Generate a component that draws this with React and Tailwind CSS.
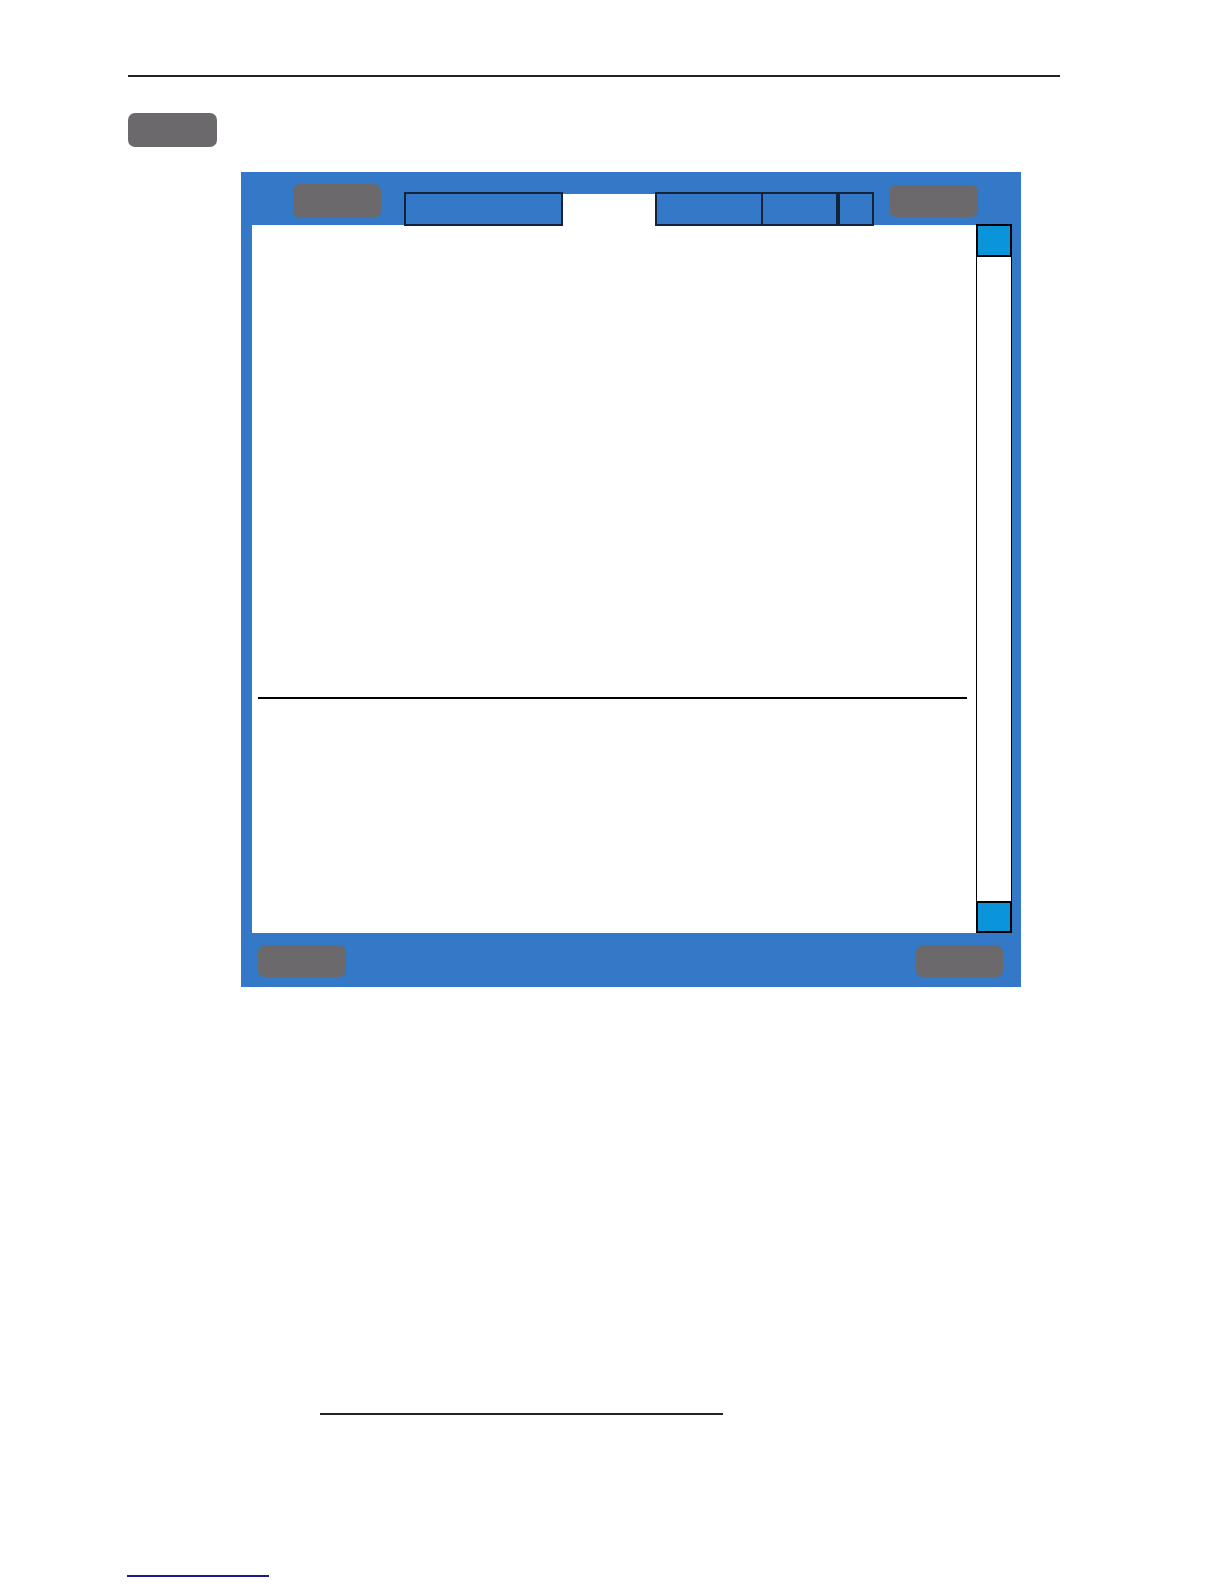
export default function App() {
  return (
    <div className="w-[1224px] h-[1584px] bg-white flex flex-col items-start overflow-hidden" style={{ fontFamily: '"Liberation Sans", Arial, sans-serif' }}>
      <div className="mt-[75px] ml-[128px] w-[932px] h-[2px] bg-[#222222]" />
      <div className="mt-[36px] ml-[128px] w-[89px] h-[34px] rounded-[7px] bg-[#6b696b]" />
      <div className="mt-[25px] ml-[241px] w-[780px] h-[815px] bg-[#3479c7] flex flex-col">
        <div className="h-[53px] flex items-start pl-[52px] pt-[12px]">
          <div className="w-[88px] h-[34px] rounded-[7px] bg-[#6b696b]" />
          <div className="relative z-10 ml-[23px] mt-[8px] flex items-start h-[34px]">
            <div className="w-[159px] h-[34px] border-2 border-[#13233a] bg-[#3479c7]" />
            <div className="w-[92px] h-[34px] mt-[1.5px] bg-white" />
            <div className="w-[108px] h-[34px] border-2 border-[#13233a] bg-[#3479c7]" />
            <div className="w-[75px] h-[34px] border-2 border-l-0 border-[#13233a] bg-[#3479c7]" />
            <div className="w-[36px] h-[34px] border-2 border-[#13233a] bg-[#3479c7]" />
          </div>
          <div className="ml-[15px] mt-[1px] w-[89px] h-[32px] rounded-[7px] bg-[#6b696b]" />
        </div>
        <div className="h-[708px] flex pl-[11px] pr-[9px]">
          <div className="flex-1 bg-white pt-[472px] pl-[6px]">
            <div className="w-[709px] h-[2px] bg-black" />
          </div>
          <div className="w-[36px] flex flex-col -mt-[1px]">
            <div className="h-[33px] border-2 border-black bg-[#0a95da]" />
            <div className="flex-1 border-x-[1.5px] border-black bg-white" />
            <div className="h-[32px] border-2 border-black bg-[#0a95da]" />
          </div>
        </div>
        <div className="flex-1 flex justify-between items-start pt-[12px] pl-[17px] pr-[18px]">
          <div className="w-[88px] h-[32px] rounded-[7px] bg-[#6b696b]" />
          <div className="w-[87px] h-[32px] rounded-[7px] bg-[#6b696b]" />
        </div>
      </div>
      <div className="mt-[426px] ml-[320px] w-[403px] h-[2px] bg-[#222222]" />
      <div className="mt-[160px] ml-[127px] w-[142px] h-[1.5px] bg-[#1c1c8c]" />
    </div>
  );
}
